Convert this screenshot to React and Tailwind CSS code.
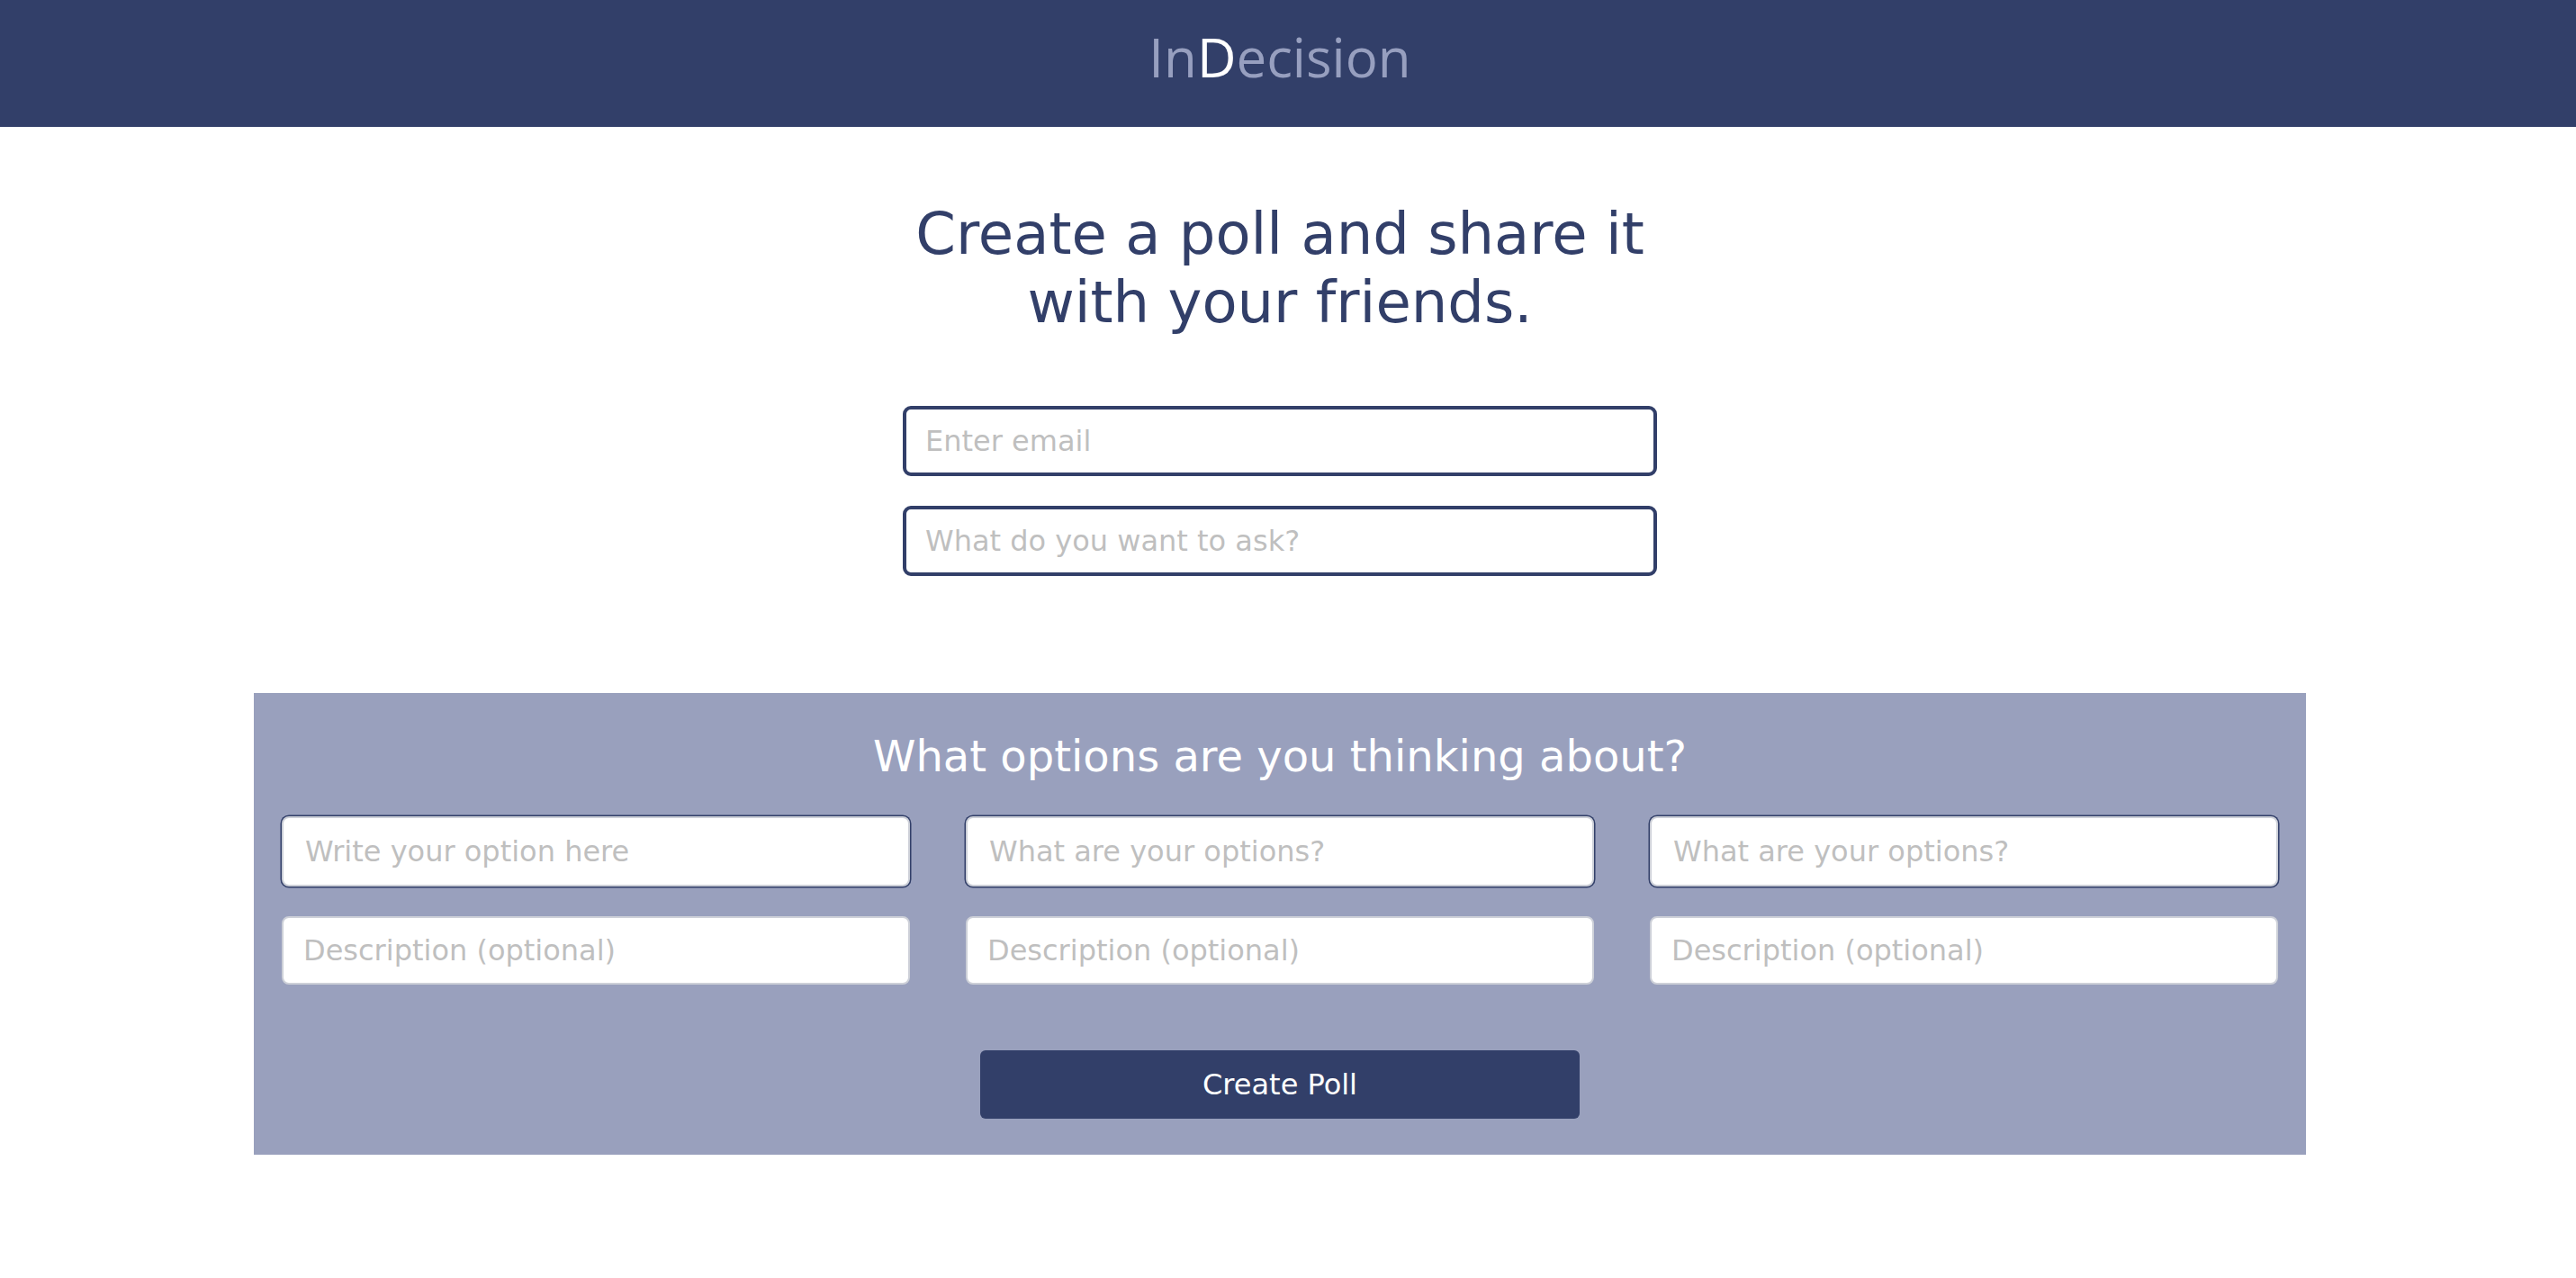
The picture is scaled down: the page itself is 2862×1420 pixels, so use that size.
export default function App() {
  const inputBase =
    "bg-white text-[32px] text-[#323f69] font-['DejaVu_Sans',sans-serif] placeholder:text-[#bfbfbf] outline-none";
  return (
    <div className="min-h-screen bg-white">
      <header className="h-[141px] bg-[#323f69] pr-[18px]">
        <div className="pt-[33px] text-center text-[60px] leading-[60px] text-[#979fbf] font-['Open_Sans',sans-serif]">
          In<span className="text-white">D</span>ecision
        </div>
      </header>
      <main className="pr-[18px] font-['DejaVu_Sans',sans-serif]">
        <h1 className="mt-[81px] text-center text-[64px] leading-[76px] font-normal text-[#323f69]">
          Create a poll and share it
          <br />
          with your friends.
        </h1>
        <div className="mt-[77px] flex flex-col items-center gap-[33px]">
          <input
            className={`${inputBase} w-[838px] h-[78px] border-4 border-[#323f69] rounded-[9px] px-[21px]`}
            placeholder="Enter email"
          />
          <input
            className={`${inputBase} w-[838px] h-[78px] border-4 border-[#323f69] rounded-[9px] px-[21px]`}
            placeholder="What do you want to ask?"
          />
        </div>
        <section className="mt-[130px] mx-auto w-[2280px] bg-[#99a0bd] pt-[42px] pb-[40px] px-[31px]">
          <h2 className="text-center text-white text-[48px] leading-[56px] font-normal">
            What options are you thinking about?
          </h2>
          <div className="mt-[39px] grid grid-cols-3 gap-x-[62px] gap-y-[33px]">
            {["Write your option here", "What are your options?", "What are your options?"].map((p, i) => (
              <input
                key={"o" + i}
                className={`${inputBase} w-full h-[78px] border-2 border-[#cdd0d8] rounded-[8px] shadow-[0_0_0_1.5px_#323f69] px-[24px]`}
                placeholder={p}
              />
            ))}
            {[0, 1, 2].map((i) => (
              <input
                key={"d" + i}
                className={`${inputBase} w-full h-[76px] border-2 border-[#cdd0d8] rounded-[8px] px-[22px]`}
                placeholder="Description (optional)"
              />
            ))}
          </div>
          <div className="mt-[73px] flex justify-center">
            <button className="w-[666px] h-[76px] rounded-[6px] bg-[#323f69] text-white text-[32px]">
              Create Poll
            </button>
          </div>
        </section>
      </main>
    </div>
  );
}
